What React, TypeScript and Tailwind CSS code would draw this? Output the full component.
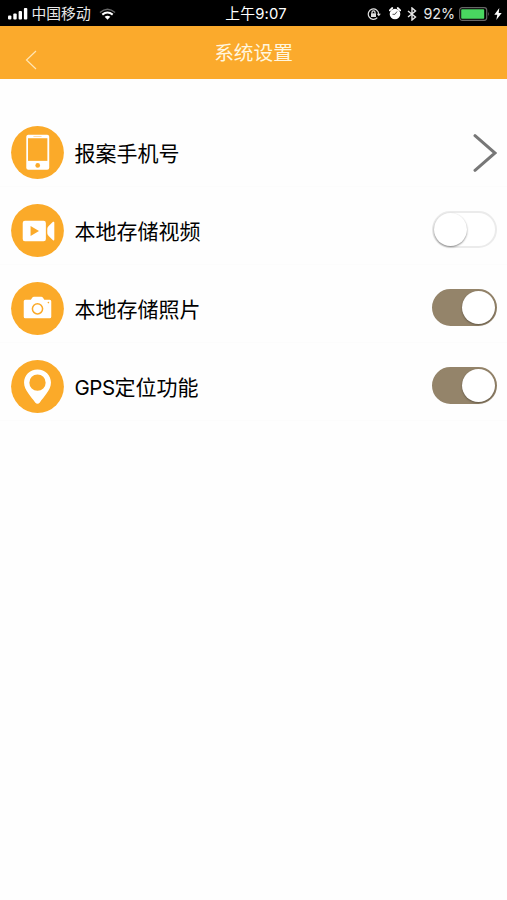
import { useState, type ReactNode } from "react";

interface SettingRowProps {
  icon: ReactNode;
  label: ReactNode;
  children: ReactNode;
}

function SettingRow({ icon, label, children }: SettingRowProps) {
  return (
    <div className="flex h-[78px] items-center border-b border-[#fcfcfc] pl-[11px] pr-[10px] pt-[10px]">
      <svg viewBox="0 0 52 52" className="h-[53px] w-[53px] shrink-0">
        <circle cx="26" cy="26" r="25.900" fill="#fbaa29" />
        {icon}
      </svg>
      <span className="ml-[10.500px] flex-1 whitespace-nowrap pt-[2px] text-[21px] leading-[30px] text-black">{label}</span>
      {children}
    </div>
  );
}

function Toggle({ checked, onChange }: { checked: boolean; onChange: (value: boolean) => void }) {
  return (
    <button
      type="button"
      role="switch"
      aria-checked={checked}
      onClick={() => onChange(!checked)}
      className={`mb-[2px] flex h-[37px] w-[65px] items-center rounded-full border-2 ${
        checked ? "justify-end border-[#94846a] bg-[#94846a]" : "justify-start border-[#ebebeb] bg-white"
      }`}
    >
      <span
        className={`h-[33px] w-[33px] rounded-full bg-white ${
          checked ? "shadow-[0_1px_2px_rgba(0,0,0,0.35)]" : "shadow-[0_1px_2px_rgba(0,0,0,0.45)]"
        }`}
      />
    </button>
  );
}

const phoneIcon = (
  <>
    <rect x="15" y="8.5" width="22.5" height="34.5" rx="2" fill="#fff" />
    <rect x="16.7" y="12" width="19" height="22.2" fill="#fbaa29" />
    <path d="M22 10.3h8" stroke="#fbd596" strokeWidth="0.8" />
    <circle cx="26.2" cy="38.7" r="2.3" fill="#fbaa29" />
  </>
);

const videoIcon = (
  <>
    <rect x="11.5" y="16.5" width="22.7" height="20" rx="2.2" fill="#fff" />
    <path d="M19.2 21.5v10l8.3-5z" fill="#fbaa29" />
    <path d="M41.2 17.5q1.3-.7 1.3 1v16q0 1.7-1.3 1l-4-3.8q-1.6-1.5-1.6-3v-4.4q0-1.5 1.6-3z" fill="#fff" />
  </>
);

const cameraIcon = (
  <>
    <path
      d="M14 17.500h5.500l1.300-2q.6-1 1.800-1h7q1.200 0 1.800 1l1.300 2h5.300q1.500 0 1.500 1.500v15q0 1.500-1.500 1.500h-24q-1.500 0-1.500-1.500v-15q0-1.500 1.500-1.500z"
      fill="#fff"
    />
    <circle cx="26" cy="26.3" r="5" fill="none" stroke="#fbaa29" strokeWidth="1.500" />
    <circle cx="36.7" cy="20.2" r="0.8" fill="#fbaa29" />
  </>
);

const pinIcon = (
  <path
    fillRule="evenodd"
    d="M26 9.200c-7.500 0-13.200 5.600-13.200 12.800 0 7.700 7.400 14.200 10.900 19.600q2.300 2.700 4.600 0c3.500-5.400 10.900-11.900 10.900-19.600 0-7.200-5.700-12.800-13.200-12.800zM26 14.200a8 8 0 1 1 0 16 8 8 0 1 1 0-16z"
    fill="#fff"
  />
);

function StatusBar() {
  return (
    <div className="grid h-[25.5px] grid-cols-[1fr_auto_1fr] items-center bg-black leading-[20px] text-[#e8e8e8]">
      <div className="flex items-center pl-[8px] pt-[2px]">
        <svg viewBox="0 0 20 12" className="h-[12px] w-[20px]" fill="#fff">
          <rect x="0" y="7.5" width="3.4" height="4" rx="1" />
          <rect x="5.3" y="5.5" width="3.4" height="6" rx="1" />
          <rect x="10.6" y="3" width="3.4" height="8.5" rx="1" />
          <rect x="15.9" y="0" width="3.4" height="11.5" rx="1" />
        </svg>
        <span className="ml-[3.500px] pt-px text-[14.800px]">中国移动</span>
        <svg viewBox="0 0 18 12" className="ml-[8px] h-[12px] w-[17px]" fill="none">
          <path d="M1 4.500Q9-2.500 17 4.500" stroke="#666" strokeWidth="1.500" />
          <path d="M3.500 6.700Q9 2.200 14.500 6.700" stroke="#fff" strokeWidth="2.200" />
          <path d="M6 9Q9 6.500 12 9L9 12z" fill="#fff" />
        </svg>
      </div>
      <span className="pl-[5px] pt-[3px] text-[14.800px] tracking-[0.200px] text-white">上午9:07</span>
      <div className="flex items-center justify-end pr-[5px] pt-[2px]">
        <svg viewBox="0 0 14 12" className="h-[12px] w-[14px]" fill="none" stroke="#e0e0e0" strokeWidth="1.200">
          <path d="M10.300 9.700A5.200 5.200 0 1 1 11.700 6" />
          <path d="M9.700 5.800h4.200l-2.100 2.500z" fill="#e0e0e0" stroke="none" />
          <rect x="4" y="5.300" width="5" height="3.700" fill="#e0e0e0" stroke="none" />
          <path d="M5 5.500V4.300a1.500 1.500 0 0 1 3 0v1.200" />
        </svg>
        <svg viewBox="0 0 12 13" className="ml-[8px] h-[13px] w-[12px]">
          <circle cx="6" cy="7" r="5.300" fill="#fff" />
          <path d="M.8 3.300 3.300 1M11.200 3.300 8.700 1" stroke="#fff" strokeWidth="1.800" strokeLinecap="round" />
          <path d="M8 4.500 6 7.300H3.500" stroke="#444" strokeWidth="0.900" fill="none" />
        </svg>
        <svg viewBox="0 0 10 14" className="ml-[6px] h-[14px] w-[10px]" fill="none" stroke="#e8e8e8" strokeWidth="1.400">
          <path d="m1 4 7.500 6L5 13V1l3.500 3L1 10" />
        </svg>
        <span className="ml-[6px] text-[14.300px]">92%</span>
        <svg viewBox="0 0 31 14" className="ml-[4px] h-[14px] w-[31px]">
          <rect x="0.7" y="0.7" width="27" height="12.600" rx="2.500" fill="none" stroke="#666" strokeWidth="1.200" />
          <rect x="2.200" y="2.200" width="23" height="9.600" rx="0.800" fill="#49d660" />
          <path d="M29 4.700q1.800 2.300 0 4.600z" fill="#666" />
        </svg>
        <svg viewBox="0 0 8 12" className="ml-[4px] h-[12px] w-[8px]" fill="#fff">
          <path d="M5.300 0 .3 6.700h3L2.300 12 7.700 5h-3z" />
        </svg>
      </div>
    </div>
  );
}

export default function App() {
  const [saveVideo, setSaveVideo] = useState(false);
  const [savePhoto, setSavePhoto] = useState(true);
  const [gps, setGps] = useState(true);

  return (
    <div className="min-h-[900px] bg-[#fefefe] font-['Inter','Noto_Sans_CJK_SC',sans-serif]">
      <StatusBar />
      <header className="grid h-[53.5px] grid-cols-[1fr_auto_1fr] items-center bg-[#fbaa2c] text-[#fff6df]">
        <button type="button" aria-label="返回" className="ml-[25px] mt-[15px] w-[12px]">
          <svg viewBox="0 0 12 20" className="h-[20px] w-[12px]" fill="none" stroke="#ffe6b5" strokeWidth="1.200">
            <path d="M11 1 1.500 10 11 19" />
          </svg>
        </button>
        <h1 className="pt-[2px] text-[19.700px] leading-[28px]">系统设置</h1>
      </header>
      <main className="pt-[30px]">
        <SettingRow icon={phoneIcon} label="报案手机号">
          <svg viewBox="0 0 25 38" className="h-[38px] w-[25px]" fill="none" stroke="#777" strokeWidth="3" strokeLinecap="round">
            <path d="m3 1.700 20 17.300-20 17.300" />
          </svg>
        </SettingRow>
        <SettingRow icon={videoIcon} label="本地存储视频">
          <Toggle checked={saveVideo} onChange={setSaveVideo} />
        </SettingRow>
        <SettingRow icon={cameraIcon} label="本地存储照片">
          <Toggle checked={savePhoto} onChange={setSavePhoto} />
        </SettingRow>
        <SettingRow
          icon={pinIcon}
          label={
            <>
              <span className="text-[20.500px] tracking-[-0.500px]">GPS</span>定位功能
            </>
          }
        >
          <Toggle checked={gps} onChange={setGps} />
        </SettingRow>
      </main>
    </div>
  );
}
